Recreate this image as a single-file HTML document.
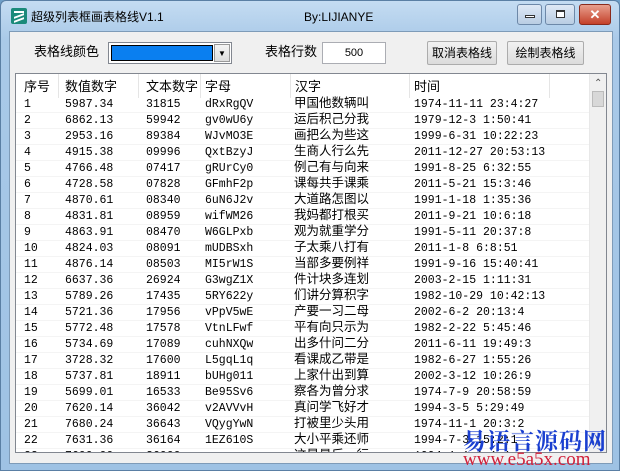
<!DOCTYPE html>
<html><head><meta charset="utf-8"><style>
*{margin:0;padding:0;box-sizing:border-box}
body{width:620px;height:471px;overflow:hidden;background:#6f9fc8;font-family:"Liberation Sans","Noto Sans CJK SC",sans-serif;position:relative}
.win{position:absolute;left:0;top:0;width:620px;height:471px;background:linear-gradient(#c4dcf2,#a9c9e8 40px,#9ec2e4);border:1px solid #5a7fa4;border-radius:6px 6px 0 0}
.client{position:absolute;left:8px;top:30px;width:604px;height:433px;background:#f0f0f0;border:1px solid #7e9bb8}
.t{position:absolute;font-size:12px;color:#000;white-space:nowrap;line-height:16px}
.btn{position:absolute;border:1px solid #acacac;background:linear-gradient(#f2f2f2,#dcdcdc);font-size:12px;text-align:center;line-height:22px;border-radius:2px}
.cap{position:absolute;top:3px;height:21px;border:1px solid #6d88a8;border-radius:3px;background:linear-gradient(#dfe9f5,#b9cde3)}
.lv{position:absolute;left:14px;top:72px;width:592px;height:380px;background:#fff;border:1px solid #828790;overflow:hidden}
.hd{position:absolute;top:0;left:0;height:24px;width:600px;font-size:13px}
.hd span{position:absolute;top:3px;line-height:20px;font-size:13px;white-space:nowrap}
.vs{position:absolute;top:0;width:1px;height:24px;background:#e5e5e5}
.row{position:absolute;left:0;height:16px;width:590px;font-family:"Liberation Mono","Noto Sans CJK SC",monospace;font-size:11.5px;line-height:16px}
.row span{position:absolute;top:0;white-space:nowrap;line-height:16px;height:16px}
.row span.h{font-family:"Noto Sans CJK SC",sans-serif;font-size:12.5px;line-height:16px;top:-3px}
.sb{position:absolute;right:0;top:0;width:17px;height:378px;background:#f0f0f0;border-left:1px solid #e8e8e8}
</style></head><body>
<div class="win">
<div style="position:absolute;left:10px;top:7px;width:16px;height:16px;background:#1b8a7a;border-radius:2px"><div style="position:absolute;left:3px;top:3px;width:10px;height:2px;background:#fff"></div><div style="position:absolute;left:3px;top:7px;width:10px;height:2px;background:#fff;transform:skewY(-20deg)"></div><div style="position:absolute;left:3px;top:11px;width:10px;height:2px;background:#fff;transform:skewY(-20deg)"></div></div>
<div class="t" style="left:30px;top:8px;font-size:12px">超级列表框画表格线V1.1</div>
<div class="t" style="left:303px;top:8px;font-size:12px">By:LIJIANYE</div>
<div class="cap" style="left:516px;width:25px"><div style="position:absolute;left:7px;top:10px;width:10px;height:3px;border:1px solid #333;background:#fff"></div></div>
<div class="cap" style="left:544px;width:30px"><div style="position:absolute;left:10px;top:5px;width:9px;height:8px;border:1px solid #333;border-top-width:2px;background:#fff"></div></div>
<div class="cap" style="left:578px;width:32px;background:linear-gradient(#e8a08e,#c4412a);border-color:#8a2a1c;color:#fff;text-align:center;font-weight:bold;font-size:13px;line-height:19px">✕</div>
<div class="client">
<div class="t" style="left:24px;top:12px;font-size:13px">表格线颜色</div>
<div style="position:absolute;left:98px;top:10px;width:124px;height:22px;border:1px solid #828790;background:#fff"><div style="position:absolute;left:2px;top:2px;width:102px;height:16px;background:#0a7ff0;border:1px solid #000"></div><div style="position:absolute;right:1px;top:1px;width:16px;height:18px;background:linear-gradient(#f4f4f4,#ddd);border:1px solid #999;font-size:8px;text-align:center;line-height:17px">▼</div></div>
<div class="t" style="left:255px;top:12px;font-size:13px">表格行数</div>
<div style="position:absolute;left:312px;top:10px;width:64px;height:22px;border:1px solid #abadb3;background:#fff;font-size:11px;text-align:center;line-height:20px">500</div>
<div class="btn" style="left:417px;top:9px;width:70px;height:24px">取消表格线</div>
<div class="btn" style="left:497px;top:9px;width:77px;height:24px">绘制表格线</div>
</div>
<div class="lv">
<div class="hd">
<span style="left:8px">序号</span><div class="vs" style="left:42px"></div>
<span style="left:49px">数值数字</span><div class="vs" style="left:122px"></div>
<span style="left:130px">文本数字</span><div class="vs" style="left:184px"></div>
<span style="left:189px">字母</span><div class="vs" style="left:274px"></div>
<span style="left:279px">汉字</span><div class="vs" style="left:393px"></div>
<span style="left:398px">时间</span><div class="vs" style="left:533px"></div>
</div>
<div id="rows"></div>
<div class="sb"><div style="position:absolute;top:4px;left:4px;font-size:10px;color:#555">⌃</div><div style="position:absolute;top:17px;left:2px;width:12px;height:16px;background:#d8d8d8;border:1px solid #bbb"></div><div style="position:absolute;bottom:4px;left:4px;font-size:10px;color:#555">⌄</div></div>
</div>
<div style="position:absolute;left:462px;top:422px;font-family:'Noto Serif CJK SC',serif;font-size:23px;color:#1a3fd0;font-weight:bold;letter-spacing:1px">易语言源码网</div>
<div style="position:absolute;left:462px;top:448px;font-family:'Liberation Serif',serif;font-size:19px;color:#d0203a">www.e5a5x.com</div>
</div>
<script>
var d=[["5987.34","31815","dRxRgQV","甲国他数辆叫","1974-11-11 23:4:27"],["6862.13","59942","gv0wU6y","运后积己分我","1979-12-3 1:50:41"],["2953.16","89384","WJvMO3E","画把么为些这","1999-6-31 10:22:23"],["4915.38","09996","QxtBzyJ","生商人行么先","2011-12-27 20:53:13"],["4766.48","07417","gRUrCy0","例己有与向来","1991-8-25 6:32:55"],["4728.58","07828","GFmhF2p","课每共手课乘","2011-5-21 15:3:46"],["4870.61","08340","6uN6J2v","大道路怎图以","1991-1-18 1:35:36"],["4831.81","08959","wifWM26","我妈都打根买","2011-9-21 10:6:18"],["4863.91","08470","W6GLPxb","观为就重学分","1991-5-11 20:37:8"],["4824.03","08091","mUDBSxh","子太乘八打有","2011-1-8 6:8:51"],["4876.14","08503","MI5rW1S","当部多要例祥","1991-9-16 15:40:41"],["6637.36","26924","G3wgZ1X","件计块多连划","2003-2-15 1:11:31"],["5789.26","17435","5RY622y","们讲分算积字","1982-10-29 10:42:13"],["5721.36","17956","vPpV5wE","产要一习二母","2002-6-2 20:13:4"],["5772.48","17578","VtnLFwf","平有向只示为","1982-2-22 5:45:46"],["5734.69","17089","cuhNXQw","出多什问二分","2011-6-11 19:49:3"],["3728.32","17600","L5gqL1q","看课成乙带是","1982-6-27 1:55:26"],["5737.81","18911","bUHg011","上家什出到算","2002-3-12 10:26:9"],["5699.01","16533","Be95Sv6","察各为曾分求","1974-7-9 20:58:59"],["7620.14","36042","v2AVVvH","真问学飞好才","1994-3-5 5:29:49"],["7680.24","36643","VQygYwN","打被里少头用","1974-11-1 20:3:2"],["7631.36","36164","1EZ610S","大小平乘还师","1994-7-3 15:2:1"],["7600.00","36000","aaaaaaa","这是最后一行","1994-1-1 1:1:1"]];
var h="";for(var i=0;i<d.length;i++){var r=d[i];h+='<div class="row" style="top:'+(23+i*16)+'px;border-bottom:1px solid #f4f4f4"><span style="left:8px">'+(i+1)+'</span><span style="left:49px">'+r[0]+'</span><span style="left:130px">'+r[1]+'</span><span style="left:189px">'+r[2]+'</span><span class="h" style="left:278px">'+r[3]+'</span><span style="left:398px">'+r[4]+'</span></div>';}
document.getElementById("rows").innerHTML=h;
</script>
</body></html>
